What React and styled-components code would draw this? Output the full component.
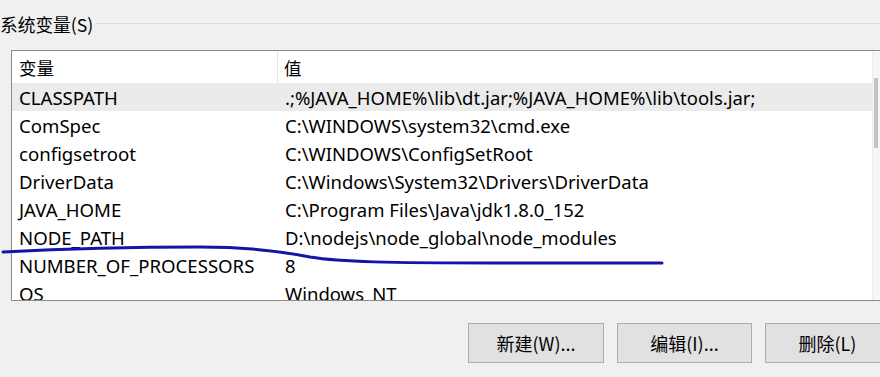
import React from 'react';
import styled, {createGlobalStyle} from 'styled-components';

const GlobalStyle = createGlobalStyle`
  html, body {
    margin: 0;
    padding: 0;
    background: #f0f0f0;
    overflow: hidden;
  }
  body {
    font-family: "Noto Sans", "Noto Sans CJK SC", sans-serif;
    color: #000;
  }
`;

const Page = styled.div`
  position: relative;
  width: 880px;
  height: 377px;
  overflow: hidden;
`;

const GroupHeader = styled.div`
  display: flex;
  align-items: center;
  height: 50px;
  padding-bottom: 2px;
  box-sizing: border-box;
`;

const GroupLabel = styled.span`
  font-family: "Noto Sans CJK SC", sans-serif;
  font-size: 17.7px;
  line-height: 20px;
  margin-top: -1px;
  margin-right: 3px;
  white-space: nowrap;
`;

const GroupLine = styled.div`
  flex: 1;
  height: 1px;
  background: #dcdcdc;
  margin-top: -2px;
`;

const ListBox = styled.div`
  margin-left: 11px;
  margin-right: -12px;
  height: 249px;
  border: 1px solid #8c8c8c;
  border-right-color: #d0d0d0;
  background: #fff;
  display: flex;
  overflow: hidden;
`;

const ListBody = styled.div`
  flex: 1;
  display: flex;
  flex-direction: column;
`;

const HeaderRow = styled.div`
  display: grid;
  grid-template-columns: 266px 1fr;
  height: 32px;
  flex-shrink: 0;
`;

const HeaderCell = styled.div`
  display: flex;
  align-items: center;
  padding-left: ${p => p.$pad}px;
  font-family: "Noto Sans CJK SC", sans-serif;
  font-size: 17.5px;
  border-right: ${p => (p.$divider ? '1px solid #e5e5e5' : 'none')};
`;

const Row = styled.div`
  display: grid;
  grid-template-columns: 266px 1fr;
  height: 28px;
  flex-shrink: 0;
  background: ${p => (p.$selected ? '#ebebeb' : '#fff')};
`;

const Cell = styled.div`
  display: flex;
  align-items: center;
  padding-left: ${p => p.$pad}px;
  font-size: ${p => p.$size}px;
  white-space: nowrap;
  overflow: hidden;
`;

const ScrollTrack = styled.div`
  width: 19px;
  flex-shrink: 0;
  border-left: 1px solid #ececec;
  background: #f7f7f7;
  padding-top: 27px;
  padding-left: 1px;
  box-sizing: border-box;
`;

const ScrollThumb = styled.div`
  width: 4px;
  height: 70px;
  background: #c4c4c4;
`;

const ButtonBar = styled.div`
  display: flex;
  gap: 13px;
  padding-left: 468px;
  margin-top: 22px;
`;

const Button = styled.button`
  flex-shrink: 0;
  width: ${p => p.$w}px;
  height: 40px;
  background: #e1e1e1;
  border: 1px solid #adadad;
  border-radius: 0;
  font-family: "Noto Sans CJK SC", sans-serif;
  font-size: 18px;
  color: #000;
  padding: 0;
  padding-right: ${p => p.$shift || 0}px;
`;

const Annotation = styled.svg`
  position: absolute;
  left: 0;
  top: 0;
  pointer-events: none;
`;

const variables = [
  ['CLASSPATH', '.;%JAVA_HOME%\\lib\\dt.jar;%JAVA_HOME%\\lib\\tools.jar;'],
  ['ComSpec', 'C:\\WINDOWS\\system32\\cmd.exe'],
  ['configsetroot', 'C:\\WINDOWS\\ConfigSetRoot'],
  ['DriverData', 'C:\\Windows\\System32\\Drivers\\DriverData'],
  ['JAVA_HOME', 'C:\\Program Files\\Java\\jdk1.8.0_152'],
  ['NODE_PATH', 'D:\\nodejs\\node_global\\node_modules'],
  ['NUMBER_OF_PROCESSORS', '8'],
  ['OS', 'Windows_NT'],
];

export default function App() {
  return (
    <Page>
      <GlobalStyle/>
      <GroupHeader>
        <GroupLabel>系统变量(S)</GroupLabel>
        <GroupLine/>
      </GroupHeader>
      <ListBox>
        <ListBody>
          <HeaderRow>
            <HeaderCell $pad={7} $divider>变量</HeaderCell>
            <HeaderCell $pad={6}>值</HeaderCell>
          </HeaderRow>
          {variables.map(([name, value], i) => (
            <Row key={name} $selected={i === 0}>
              <Cell $pad={7} $size={18.6}>{name}</Cell>
              <Cell $pad={7} $size={18.5}>{value}</Cell>
            </Row>
          ))}
        </ListBody>
        <ScrollTrack>
          <ScrollThumb/>
        </ScrollTrack>
      </ListBox>
      <ButtonBar>
        <Button $w={136}>新建(W)...</Button>
        <Button $w={135}>编辑(I)...</Button>
        <Button $w={135} $shift={10}>删除(L)</Button>
      </ButtonBar>
      <Annotation width="880" height="377" viewBox="0 0 880 377">
        <path
          d="M3 252 C 60 249, 140 247, 200 247 C 250 247, 280 251, 310 257 C 340 262, 390 263, 493 263 L 662 263"
          fill="none"
          stroke="#1414a8"
          strokeWidth="3"
          strokeLinecap="round"
        />
      </Annotation>
    </Page>
  );
}
